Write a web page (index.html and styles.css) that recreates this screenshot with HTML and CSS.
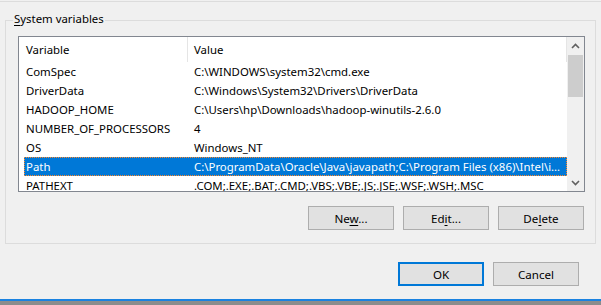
FILE: index.html
```html
<!DOCTYPE html>
<html>
<head>
<meta charset="utf-8">
<link rel="stylesheet" href="styles.css">
</head>
<body>
<div class="top-rule"></div>
<div class="group">
  <span class="legend"><u>S</u>ystem variables</span>
  <div class="list">
    <div class="list-main">
      <div class="header">
        <div class="hcell c1">Variable</div>
        <div class="hcell c2">Value</div>
      </div>
      <div class="rows">
        <div class="row"><span class="cell c1">ComSpec</span><span class="cell c2">C:\WINDOWS\system32\cmd.exe</span></div>
        <div class="row"><span class="cell c1">DriverData</span><span class="cell c2">C:\Windows\System32\Drivers\DriverData</span></div>
        <div class="row"><span class="cell c1">HADOOP_HOME</span><span class="cell c2">C:\Users\hp\Downloads\hadoop-winutils-2.6.0</span></div>
        <div class="row"><span class="cell c1">NUMBER_OF_PROCESSORS</span><span class="cell c2">4</span></div>
        <div class="row"><span class="cell c1">OS</span><span class="cell c2">Windows_NT</span></div>
        <div class="row selected"><span class="cell c1">Path</span><span class="cell c2">C:\ProgramData\Oracle\Java\javapath;C:\Program Files (x86)\Intel\iCLS Client\;C:\Program Files\Intel\iCLS Client\</span></div>
        <div class="row"><span class="cell c1">PATHEXT</span><span class="cell c2">.COM;.EXE;.BAT;.CMD;.VBS;.VBE;.JS;.JSE;.WSF;.WSH;.MSC</span></div>
      </div>
    </div>
    <div class="scrollbar">
      <div class="arrow"><svg width="9" height="6" viewBox="0 0 9 6"><polyline points="1,5 4.5,1.5 8,5" fill="none" stroke="#606060" stroke-width="1.6"/></svg></div>
      <div class="track"><div class="thumb"></div></div>
      <div class="arrow"><svg width="9" height="6" viewBox="0 0 9 6"><polyline points="1,1 4.5,4.5 8,1" fill="none" stroke="#606060" stroke-width="1.6"/></svg></div>
    </div>
  </div>
  <div class="btn-row">
    <button class="btn">Ne<u>w</u>...</button>
    <button class="btn">Ed<u>i</u>t...</button>
    <button class="btn">De<u>l</u>ete</button>
  </div>
</div>
<div class="dialog-buttons">
  <button class="btn default">OK</button>
  <button class="btn">Cancel</button>
</div>
<div class="taskbar"></div>
</body>
</html>
```

FILE: styles.css
```css
* { box-sizing: border-box; }
html, body { margin: 0; }
body {
  width: 601px;
  height: 305px;
  overflow: hidden;
  background: #f0f0f0;
  font-family: "Noto Sans", "Open Sans", sans-serif;
  font-size: 11.4px;
  color: #000;
}
.top-rule {
  height: 2px;
  border-bottom: 1px solid #dcdcdc;
}
.group {
  position: relative;
  margin: 18px 5px 0 5px;
  height: 224px;
  border: 1px solid #dcdcdc;
  padding: 15px 10px 0 12px;
}
.legend {
  position: absolute;
  top: -10px;
  left: 7px;
  padding: 0 1px;
  line-height: 16px;
  background: #f0f0f0;
}
.legend u, .btn u { text-decoration-thickness: 1px; text-underline-offset: 2px; }
.list {
  display: flex;
  height: 156px;
  border: 1px solid #828790;
  background: #fff;
}
.list-main {
  flex: 1;
  min-width: 0;
  overflow: hidden;
}
.header {
  display: flex;
  height: 25px;
}
.hcell {
  display: flex;
  align-items: center;
  height: 100%;
}
.hcell.c1 {
  width: 169px;
  padding-left: 7px;
  border-right: 1px solid #e5e5e5;
}
.hcell.c2 {
  flex: 1;
  padding-left: 6px;
  border-right: 1px solid #e5e5e5;
}
.rows {
  padding-left: 5px;
}
.row {
  display: flex;
  align-items: center;
  height: 19px;
  white-space: nowrap;
}
.cell { padding-left: 2px; }
.row .c1 { width: 168px; flex: none; }
.row .c2 {
  flex: 1;
  min-width: 0;
  overflow: hidden;
  text-overflow: ellipsis;
  padding-right: 5px;
}
.row.selected {
  background: #0078d7;
  color: #fff;
  outline: 1px dotted #ff8728;
  outline-offset: -1px;
}
.scrollbar {
  width: 17px;
  flex: none;
  display: flex;
  flex-direction: column;
  background: #f0f0f0;
}
.arrow {
  height: 17px;
  display: flex;
  align-items: center;
  justify-content: center;
}
.track {
  flex: 1;
  padding: 1px 1px;
}
.thumb {
  height: 42px;
  background: #cdcdcd;
}
.btn-row {
  display: flex;
  justify-content: flex-end;
  gap: 9px;
  margin-top: 14px;
  padding-right: 1px;
}
.btn {
  width: 86px;
  height: 24px;
  margin: 0;
  padding: 0;
  border: 1px solid #adadad;
  background: #e1e1e1;
  font-family: inherit;
  font-size: 11.6px;
  color: #000;
}
.btn.default {
  border: 2px solid #0078d7;
}
.dialog-buttons {
  display: flex;
  justify-content: flex-end;
  gap: 9px;
  margin-top: 18px;
  padding-right: 22px;
}
.taskbar {
  margin-top: 13px;
  height: 8px;
  border-top: 2px solid #1a82e0;
  background: #8c8c8c;
}
```
